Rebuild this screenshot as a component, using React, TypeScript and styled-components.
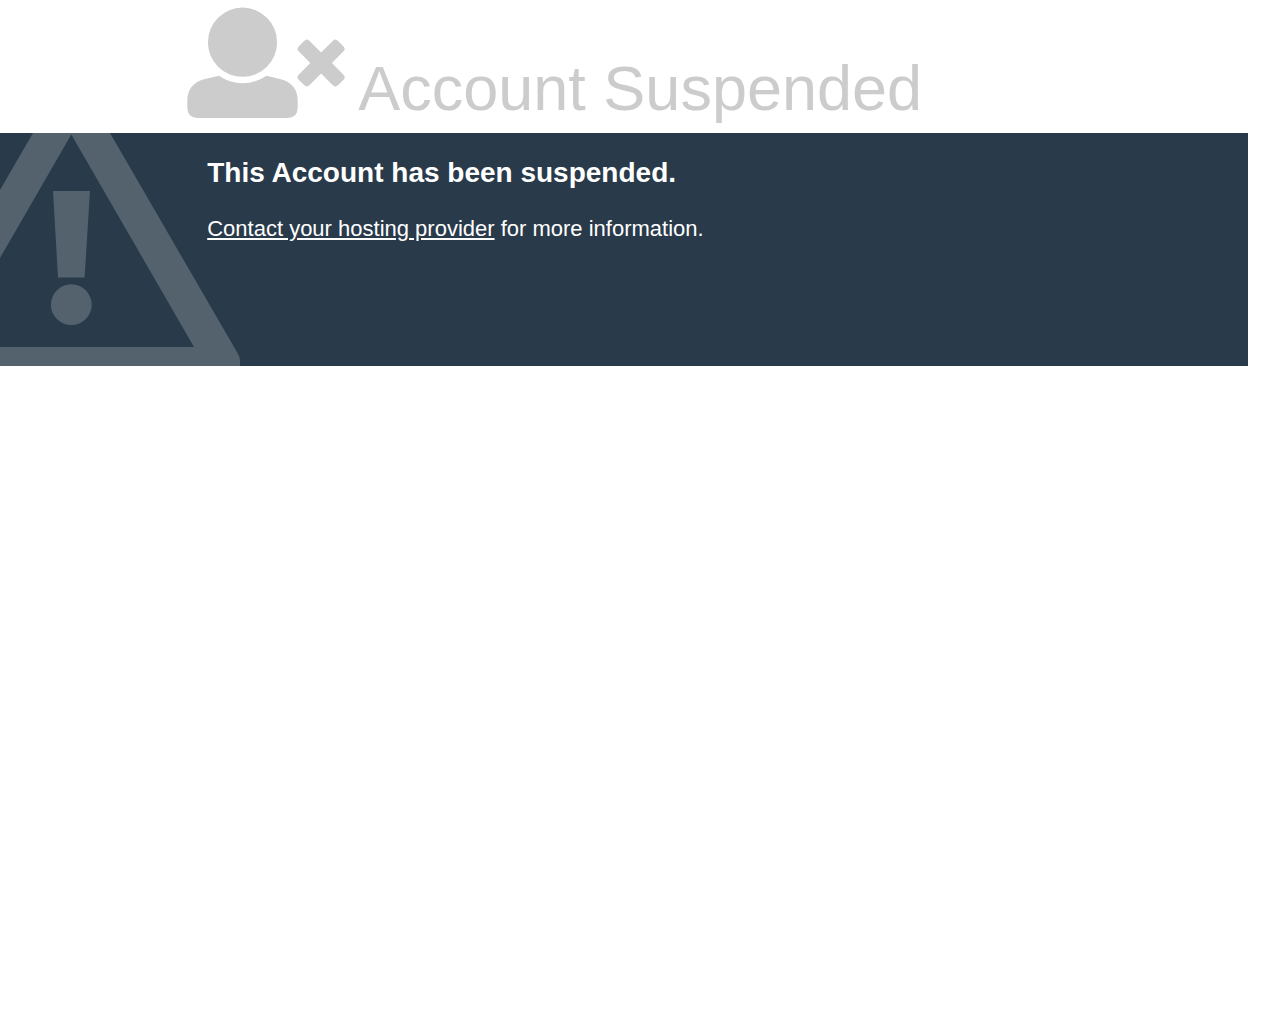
import React from "react";
import styled, { createGlobalStyle } from "styled-components";

const GlobalStyle = createGlobalStyle`
  body {
    margin: 0;
    background: #ffffff;
    color: #cccccc;
    font-family: "Liberation Sans", Arial, Helvetica, sans-serif;
  }
`;

const Page = styled.div`
  margin-right: 32px;
`;

const Container = styled.div`
  width: 70%;
  margin: 0 auto;
`;

const StatusHeader = styled(Container).attrs({ as: "header" })`
  display: flex;
  align-items: flex-end;
  gap: 13px;
  padding: 7px 0;
`;

const StatusIcon = styled.svg`
  flex: none;
  width: 158px;
  height: 112px;
  margin-bottom: 7px;
  fill: #cccccc;
`;

const StatusReason = styled.h1`
  margin: 0;
  font-size: 63px;
  line-height: 76px;
  font-weight: 400;
  white-space: nowrap;
`;

const InfoSection = styled.section`
  position: relative;
  overflow: hidden;
  min-height: 233px;
  background: #293a4a;
  color: #ffffff;
`;

const WarningBackdrop = styled.svg`
  position: absolute;
  top: 0;
  left: 0;
  width: 240px;
  height: 233px;
  fill: #ffffff;
  opacity: 0.2;
`;

const InfoContent = styled(Container)`
  position: relative;
`;

const InfoText = styled.div`
  padding: 24px 20px;
`;

const InfoHeading = styled.h2`
  margin: 0 0 24px;
  font-size: 28px;
  line-height: 32px;
  font-weight: 700;
`;

const Message = styled.p`
  margin: 0;
  font-size: 22px;
  line-height: 32px;
`;

const ProviderLink = styled.a`
  color: inherit;
  text-decoration: underline;
`;

const UserTimes = () => (
  <StatusIcon viewBox="187 7 158 112" aria-hidden="true">
    <circle cx="242.5" cy="42.2" r="34.6" />
    <path d="M219 75.7 Q230 83.3 242.5 83.3 Q255 83.3 266.500 75.7 L280 79.100 Q297.700 83.600 297.700 101 V107.600 Q297.700 118 287.300 118 H197.700 Q187.300 118 187.300 107.600 V101 Q187.300 83.600 205 79.100 Z" />
    <path d="M321.100 52.600 L333 40.800 Q335.300 38.100 338.100 41 L343.300 46.200 Q346.200 49.100 343.300 51.600 L331.900 63 L343.300 74.400 Q346.200 77.200 343.300 80 L338.100 85.100 Q335.300 87.900 332.500 85.100 L321.100 73.600 L309.700 85.100 Q306.900 87.900 304.100 85.100 L298.900 80 Q296 77.200 298.900 74.400 L310.300 63 L298.900 51.600 Q296 49.100 298.900 46.200 L304.100 41 Q306.900 38.100 309.400 40.800 Z" />
  </StatusIcon>
);

const WarningTriangle = () => (
  <WarningBackdrop viewBox="0 133 240 233" aria-hidden="true">
    <path
      fillRule="evenodd"
      d="M33 133 H110 L237.500 353 Q240 357 240 361 V366 H0 V347 H194 L71.300 134.500 L0 258 V190 Z"
    />
    <path d="M53 191 H90 L84.600 277.600 H58 Z" />
    <circle cx="71.300" cy="304.700" r="20.400" />
  </WarningBackdrop>
);

export default function App() {
  return (
    <>
      <GlobalStyle />
      <Page>
        <StatusHeader>
          <UserTimes />
          <StatusReason>Account Suspended</StatusReason>
        </StatusHeader>
        <InfoSection>
          <WarningTriangle />
          <InfoContent>
            <InfoText>
              <InfoHeading>This Account has been suspended.</InfoHeading>
              <Message>
                <ProviderLink href="#contact">Contact your hosting provider</ProviderLink> for more
                information.
              </Message>
            </InfoText>
          </InfoContent>
        </InfoSection>
      </Page>
    </>
  );
}
